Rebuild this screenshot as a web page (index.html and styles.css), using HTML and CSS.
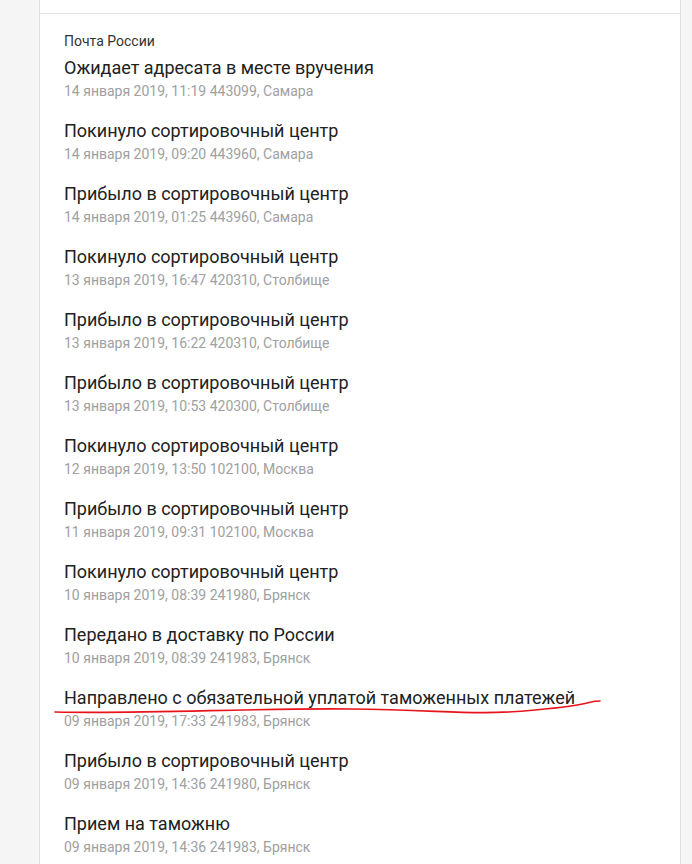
FILE: index.html
```html
<!DOCTYPE html>
<html lang="ru">
<head>
    <meta charset="UTF-8">
    <meta name="viewport" content="width=device-width, initial-scale=1.0">
    <title>Отслеживание</title>
    <link rel="stylesheet" href="styles.css">
</head>
<body>
    <div class="page">
        <div class="card">
            <div class="card-top"></div>

            <div class="events">
                <div class="carrier">Почта России</div>

                <div class="event">
                    <div class="event-title">Ожидает адресата в месте вручения</div>
                    <div class="event-info">14 января 2019, 11:19 443099, Самара</div>
                </div>
                <div class="event">
                    <div class="event-title">Покинуло сортировочный центр</div>
                    <div class="event-info">14 января 2019, 09:20 443960, Самара</div>
                </div>
                <div class="event">
                    <div class="event-title">Прибыло в сортировочный центр</div>
                    <div class="event-info">14 января 2019, 01:25 443960, Самара</div>
                </div>
                <div class="event">
                    <div class="event-title">Покинуло сортировочный центр</div>
                    <div class="event-info">13 января 2019, 16:47 420310, Столбище</div>
                </div>
                <div class="event">
                    <div class="event-title">Прибыло в сортировочный центр</div>
                    <div class="event-info">13 января 2019, 16:22 420310, Столбище</div>
                </div>
                <div class="event">
                    <div class="event-title">Прибыло в сортировочный центр</div>
                    <div class="event-info">13 января 2019, 10:53 420300, Столбище</div>
                </div>
                <div class="event">
                    <div class="event-title">Покинуло сортировочный центр</div>
                    <div class="event-info">12 января 2019, 13:50 102100, Москва</div>
                </div>
                <div class="event">
                    <div class="event-title">Прибыло в сортировочный центр</div>
                    <div class="event-info">11 января 2019, 09:31 102100, Москва</div>
                </div>
                <div class="event">
                    <div class="event-title">Покинуло сортировочный центр</div>
                    <div class="event-info">10 января 2019, 08:39 241980, Брянск</div>
                </div>
                <div class="event">
                    <div class="event-title">Передано в доставку по России</div>
                    <div class="event-info">10 января 2019, 08:39 241983, Брянск</div>
                </div>
                <div class="event">
                    <div class="event-title">Направлено с обязательной уплатой таможенных платежей</div>
                    <div class="event-info">09 января 2019, 17:33 241983, Брянск</div>
                </div>
                <div class="event">
                    <div class="event-title">Прибыло в сортировочный центр</div>
                    <div class="event-info">09 января 2019, 14:36 241980, Брянск</div>
                </div>
                <div class="event">
                    <div class="event-title">Прием на таможню</div>
                    <div class="event-info">09 января 2019, 14:36 241983, Брянск</div>
                </div>
            </div>
        </div>

        <!-- hand drawn mark under the customs line -->
        <svg class="scribble" width="692" height="864" viewBox="0 0 692 864">
            <path d="M55,712 C150,714 250,708 350,709 S470,716 535,710 S585,701 600,701" fill="none" stroke="#e8141c" stroke-width="1.6" stroke-linecap="round"/>
        </svg>
    </div>
</body>
</html>
```

FILE: styles.css
```css
body {
    margin: 0;
    background-color: #f5f5f5;
    font-family: Roboto, "Noto Sans", Arial, sans-serif;
}
.page {
    position: relative;
    padding-left: 39px;
    height: 864px;
    overflow: hidden;
}
.card {
    width: 640px;
    min-height: 864px;
    background-color: #fff;
    border-left: 1px solid #e0e0e0;
    border-right: 1px solid #e0e0e0;
}
.card-top {
    height: 13px;
    border-bottom: 1px solid #e4e4e4;
}
.events {
    padding: 18px 24px 0 24px;
}
.carrier {
    font-size: 14px;
    line-height: 18px;
    color: #333;
    margin-bottom: 6px;
}
.event {
    margin-bottom: 17px;
}
.event-title {
    font-size: 18px;
    line-height: 24px;
    color: #212121;
}
.event-info {
    font-size: 14px;
    line-height: 22px;
    color: #a0a0a0;
}
.scribble {
    position: absolute;
    left: 0;
    top: 0;
    pointer-events: none;
}
```
